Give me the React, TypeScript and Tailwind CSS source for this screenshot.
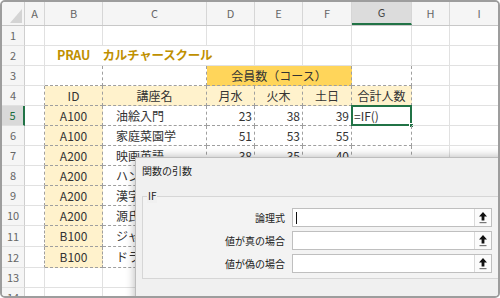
import React from "react";

const GRID = "border-r border-b border-[#e1e1e1]";
const DASH = "border-r border-b border-dashed border-[#9f9f9f]";
const A_TBL = "border-r border-b border-r-[#9f9f9f] border-b-[#e1e1e1] [border-right-style:dashed]";

type RowProps = { n: number; h?: string; sel?: boolean; children?: React.ReactNode };

function Row({ n, h = "h-[20px]", sel = false, children }: RowProps) {
  return (
    <div className={`flex ${h}`}>
      <div
        className={`w-[23px] shrink-0 flex items-center justify-center text-[11px] border-b border-[#e1e1e1] ${
          sel ? "bg-[#d9d9d9] text-[#1b6b3d] border-r-2 border-r-[#217346]" : "bg-[#f5f5f5] text-[#666] border-r border-r-[#cfcfcf]"
        }`}
      >
        {n}
      </div>
      {children}
    </div>
  );
}

function Cell({ w, cls = "", children }: { w: string; cls?: string; children?: React.ReactNode }) {
  return (
    <div className={`${w} shrink-0 relative flex items-center whitespace-nowrap overflow-hidden ${cls}`}>
      {children}
    </div>
  );
}

function Tail() {
  return (
    <>
      <Cell w="w-[38px]" cls={GRID} />
      <div className="flex-1 border-b border-[#e1e1e1]" />
    </>
  );
}

function Blank({ n, h }: { n: number; h?: string }) {
  return (
    <Row n={n} h={h}>
      <Cell w="w-[20px]" cls={GRID} />
      <Cell w="w-[58px]" cls={GRID} />
      <Cell w="w-[104px]" cls={GRID} />
      <Cell w="w-[48px]" cls={GRID} />
      <Cell w="w-[48px]" cls={GRID} />
      <Cell w="w-[49px]" cls={GRID} />
      <Cell w="w-[60px]" cls={GRID} />
      <Tail />
    </Row>
  );
}

const courses = [
  { n: 5, id: "A100", name: "油絵入門", d: 23, e: 38, f: 39 },
  { n: 6, id: "A100", name: "家庭菜園学", d: 51, e: 53, f: 55 },
  { n: 7, id: "A200", name: "映画英語", d: 38, e: 35, f: 40 },
  { n: 8, id: "A200", name: "ハングル", d: 18, e: 22, f: 27 },
  { n: 9, id: "A200", name: "漢字検定", d: 30, e: 28, f: 33 },
  { n: 10, id: "A200", name: "源氏物語", d: 15, e: 19, f: 21 },
  { n: 11, id: "B100", name: "ジャズダンス", d: 26, e: 31, f: 36 },
  { n: 12, id: "B100", name: "ドラム入門", d: 12, e: 14, f: 17 },
];

function UpArrow() {
  return (
    <svg width="8" height="12" viewBox="0 0 8 12">
      <polygon points="4,0 8,4.5 5.4,4.5 5.4,8.5 2.6,8.5 2.6,4.5 0,4.5" fill="#111" />
      <rect x="0.5" y="10" width="7" height="1.2" fill="#777" />
    </svg>
  );
}

function ArgRow({ label, cursor = false }: { label: string; cursor?: boolean }) {
  return (
    <div className="flex items-center h-[19px]">
      <div className="w-[142px] text-right text-[10px] leading-none text-[#222]">{label}</div>
      <div className="ml-[7px] flex w-[200px] h-[19px] border border-[#bfbfbf] bg-white">
        <div className="relative flex-1">
          {cursor && <div className="absolute left-[3px] top-[3px] h-[12px] w-px bg-[#111]" />}
        </div>
        <div className="w-[17px] flex items-center justify-center border-l border-[#dadada] bg-[#fbfbfb]">
          <UpArrow />
        </div>
      </div>
    </div>
  );
}

export default function App() {
  const letters: [string, string, boolean][] = [
    ["A", "w-[20px]", false],
    ["B", "w-[58px]", false],
    ["C", "w-[104px]", false],
    ["D", "w-[48px]", false],
    ["E", "w-[48px]", false],
    ["F", "w-[49px]", false],
    ["G", "w-[60px]", true],
    ["H", "w-[38px]", false],
  ];

  return (
    <div className="w-[500px] h-[298px] relative overflow-hidden border-2 border-[#9d9d9d] rounded-[5px] bg-white text-[#333] font-['Noto_Sans_CJK_JP','Liberation_Sans',sans-serif]">
      {/* column headers */}
      <div className="flex h-[24px] border-b border-[#c8c8c8] bg-[#f5f5f5] text-[11px] text-[#666]">
        <div className="relative w-[23px] shrink-0 border-r border-[#cfcfcf]">
          <svg className="absolute right-[2px] bottom-[2px]" width="12" height="14" viewBox="0 0 12 14">
            <polygon points="12,0 12,14 0,14" fill="#d4d4d4" />
          </svg>
        </div>
        {letters.map(([l, w, sel]) => (
          <div
            key={l}
            className={`${w} shrink-0 flex items-center justify-center border-r border-[#d6d6d6] ${
              sel ? "bg-[#dcdcdc] text-[#444] border-b-2 border-b-[#217346]" : ""
            }`}
          >
            {l}
          </div>
        ))}
        <div className="flex-1 flex items-center justify-center pl-[10px]">I</div>
      </div>

      <Blank n={1} />

      <Row n={2}>
        <Cell w="w-[20px]" cls={GRID} />
        <Cell w="w-[210px]" cls={GRID}>
          <span className="pl-[12px] text-[12.5px] font-bold text-[#bf9000] tracking-[-0.2px]">PRAU　カルチャースクール</span>
        </Cell>
        <Cell w="w-[48px]" cls={GRID} />
        <Cell w="w-[49px]" cls={GRID} />
        <Cell w="w-[60px]" cls={GRID} />
        <Tail />
      </Row>

      <Row n={3}>
        <Cell w="w-[20px]" cls={GRID} />
        <Cell w="w-[58px]" cls={DASH} />
        <Cell w="w-[104px]" cls={DASH} />
        <Cell w="w-[145px]" cls={`${DASH} bg-[#ffd55a] justify-center text-[12px]`}>
          会員数（コース）
        </Cell>
        <Cell w="w-[60px]" cls={DASH} />
        <Tail />
      </Row>

      <Row n={4}>
        <Cell w="w-[20px]" cls={A_TBL} />
        <Cell w="w-[58px]" cls={`${DASH} bg-[#fff2cc] justify-center text-[12px]`}>ID</Cell>
        <Cell w="w-[104px]" cls={`${DASH} bg-[#fff2cc] justify-center text-[12px]`}>講座名</Cell>
        <Cell w="w-[48px]" cls={`${DASH} bg-[#fff2cc] justify-center text-[12px]`}>月水</Cell>
        <Cell w="w-[48px]" cls={`${DASH} bg-[#fff2cc] justify-center text-[12px]`}>火木</Cell>
        <Cell w="w-[49px]" cls={`${DASH} bg-[#fff2cc] justify-center text-[12px]`}>土日</Cell>
        <Cell w="w-[60px]" cls={`${DASH} bg-[#fff2cc] justify-center text-[12px]`}>合計人数</Cell>
        <Tail />
      </Row>

      {courses.map((c) => (
        <Row key={c.n} n={c.n} sel={c.n === 5} h={c.n === 11 || c.n === 12 ? "h-[21px]" : "h-[20px]"}>
          <Cell w="w-[20px]" cls={A_TBL} />
          <Cell w="w-[58px]" cls={`${DASH} bg-[#fff2cc] justify-center text-[12px]`}>{c.id}</Cell>
          <Cell w="w-[104px]" cls={`${DASH} pl-[13px] text-[12px]`}>{c.name}</Cell>
          <Cell w="w-[48px]" cls={`${DASH} justify-end pr-[2px] text-[12px]`}>{c.d}</Cell>
          <Cell w="w-[48px]" cls={`${DASH} justify-end pr-[2px] text-[12px]`}>{c.e}</Cell>
          <Cell w="w-[49px]" cls={`${DASH} justify-end pr-[2px] text-[12px]`}>{c.f}</Cell>
          <div className={`w-[60px] shrink-0 relative flex items-center text-[12px] ${DASH}`}>
            {c.n === 5 && (
              <>
                <span className="pl-[2px]">=IF()</span>
                <div className="absolute -left-[1px] -top-[1px] w-[61px] h-[21px] border-2 border-[#217346]" />
                <div className="absolute -right-[3px] -bottom-[3px] w-[5px] h-[5px] bg-[#217346] border border-white" />
              </>
            )}
          </div>
          <Tail />
        </Row>
      ))}

      <Blank n={13} />
      <Blank n={14} />

      {/* 関数の引数 dialog */}
      <div className="absolute left-[133px] top-[155px] w-[420px] h-[200px] bg-[#f0f0f0] border border-[#bdbdbd] shadow-[0_0_9px_rgba(0,0,0,0.3)]">
        <div className="h-[38px] pl-[6px] pt-[6px] text-[10px] leading-[14px] text-[#222]">関数の引数</div>
        <div className="relative ml-[6px] h-[83px] border border-[#d6d6d6] bg-[#f3f3f3]">
          <span className="absolute left-[4px] -top-[8px] px-[1px] text-[10px] leading-[14px] text-[#222] bg-[#f0f0f0]">IF</span>
          <div className="flex flex-col gap-[4px] pt-[11px]">
            <ArgRow label="論理式" cursor />
            <ArgRow label="値が真の場合" />
            <ArgRow label="値が偽の場合" />
          </div>
        </div>
      </div>
    </div>
  );
}
